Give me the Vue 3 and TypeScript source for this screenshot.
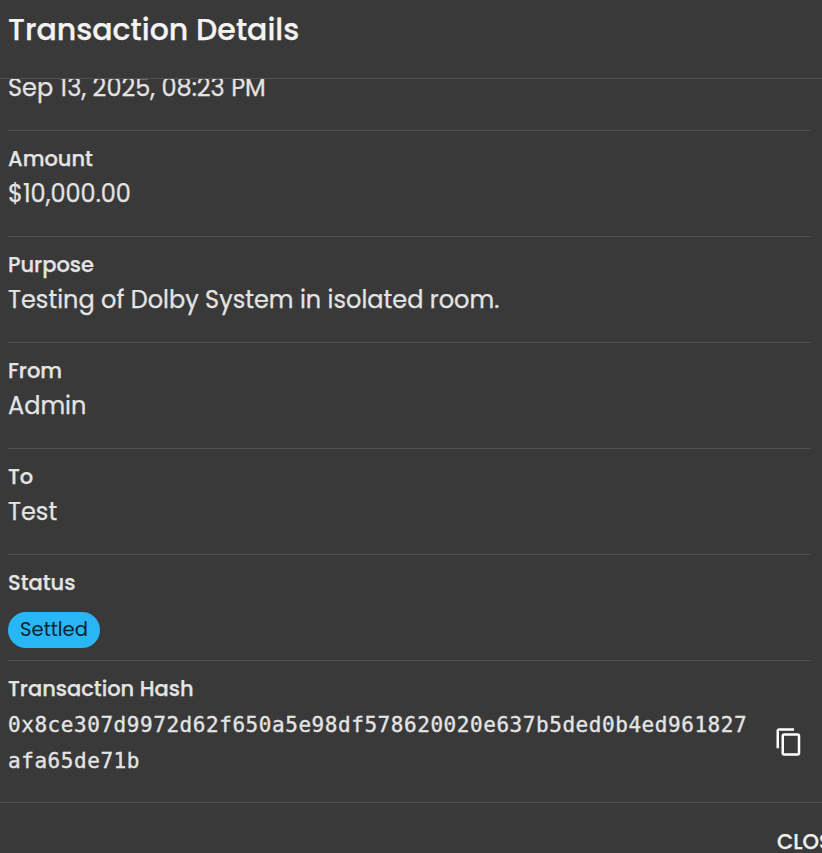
<script setup lang="ts">
interface Detail {
  key: string
  label: string
  value: string
}

const timestamp = 'Sep 13, 2025, 08:23 PM'

const details: Detail[] = [
  { key: 'amount', label: 'Amount', value: '$10,000.00' },
  { key: 'purpose', label: 'Purpose', value: 'Testing of Dolby System in isolated room.' },
  { key: 'from', label: 'From', value: 'Admin' },
  { key: 'to', label: 'To', value: 'Test' },
]

const hash = '0x8ce307d9972d62f650a5e98df578620020e637b5ded0b4ed961827afa65de71b'

function copyHash(): void {
  void navigator.clipboard?.writeText(hash)
}
</script>

<template>
  <section class="dialog" role="dialog">
    <header class="head">
      <h2 class="title">Transaction Details</h2>
    </header>
    <div class="content">
      <div class="row row-date">
        <span class="value">{{ timestamp }}</span>
      </div>
      <div v-for="d in details" :key="d.key" class="row">
        <span class="label">{{ d.label }}</span>
        <span class="value">{{ d.value }}</span>
      </div>
      <div class="row row-status">
        <span class="label">Status</span>
        <span class="chip">Settled</span>
      </div>
      <div class="row row-hash">
        <div class="hash-text">
          <span class="label">Transaction Hash</span>
          <span class="code">{{ hash }}</span>
        </div>
        <button class="copy" type="button" @click="copyHash">
          <svg viewBox="0 0 24 24" width="30" height="30" fill="currentColor">
            <path d="M16 1H4c-1.1 0-2 .9-2 2v14h2V3h12V1zm3 4H8c-1.1 0-2 .9-2 2v14c0 1.1.9 2 2 2h11c1.1 0 2-.9 2-2V7c0-1.1-.9-2-2-2zm0 16H8V7h11v14z" />
          </svg>
        </button>
      </div>
    </div>
    <footer class="foot">
      <button class="close" type="button">CLOSE</button>
    </footer>
  </section>
</template>

<style>
body {
  margin: 0;
  background: #393939;
}
</style>

<style scoped>
.dialog {
  display: flex;
  flex-direction: column;
  box-sizing: border-box;
  height: 853px;
  overflow: hidden;
  background: #393939;
  color: #e4e4e4;
  font-family: Poppins, Inter, sans-serif;
  -webkit-text-stroke: 0.25px currentColor;
}
.head {
  box-sizing: border-box;
  flex: none;
  height: 79px;
  padding: 6px 8px 0;
  border-bottom: 1px solid #515151;
}
.title {
  margin: 0;
  font-size: 30px;
  line-height: 48px;
  font-weight: 500;
  color: #f3f3f3;
  white-space: nowrap;
}
.content {
  flex: none;
  height: 723px;
  padding: 0 11px 0 8px;
  overflow: hidden;
}
.row {
  display: flex;
  flex-direction: column;
  align-items: flex-start;
  box-sizing: border-box;
  height: 106px;
  padding: 12px 0 24px;
  border-bottom: 1px solid #515151;
}
.row-date {
  justify-content: flex-end;
  height: 52px;
  padding-top: 0;
}
.label {
  display: block;
  margin-bottom: 2px;
  font-size: 21px;
  line-height: 31px;
  font-weight: 500;
  white-space: nowrap;
}
.value {
  font-size: 24px;
  line-height: 36px;
  white-space: nowrap;
}
.chip {
  box-sizing: border-box;
  width: 92px;
  height: 36px;
  margin-top: 12px;
  border-radius: 18px;
  background: #29b6f6;
  color: #08242f;
  font-size: 19.5px;
  line-height: 35px;
  text-align: center;
  -webkit-text-stroke-width: 0;
}
.row-status {
  padding-bottom: 12px;
}
.row-hash {
  flex-direction: row;
  align-items: center;
  height: 141px;
  border-bottom: 0;
}
.hash-text {
  width: 742px;
}
.code {
  display: block;
  padding-top: 1px;
  font-family: Consolas, 'DejaVu Sans Mono', monospace;
  font-size: 21px;
  letter-spacing: 0.557px;
  line-height: 36px;
  word-break: break-all;
  -webkit-text-stroke-width: 0.35px;
}
.copy {
  display: flex;
  margin: 32px 0 0 24px;
  padding: 0;
  border: 0;
  background: none;
  color: #fff;
}
.foot {
  box-sizing: border-box;
  flex: none;
  height: 51px;
  padding: 23px 0 0 777px;
  border-top: 1px solid #515151;
}
.close {
  padding: 0;
  border: 0;
  background: none;
  color: #f0f0f0;
  font: inherit;
  font-size: 21px;
  line-height: 32px;
  font-weight: 500;
}
</style>
